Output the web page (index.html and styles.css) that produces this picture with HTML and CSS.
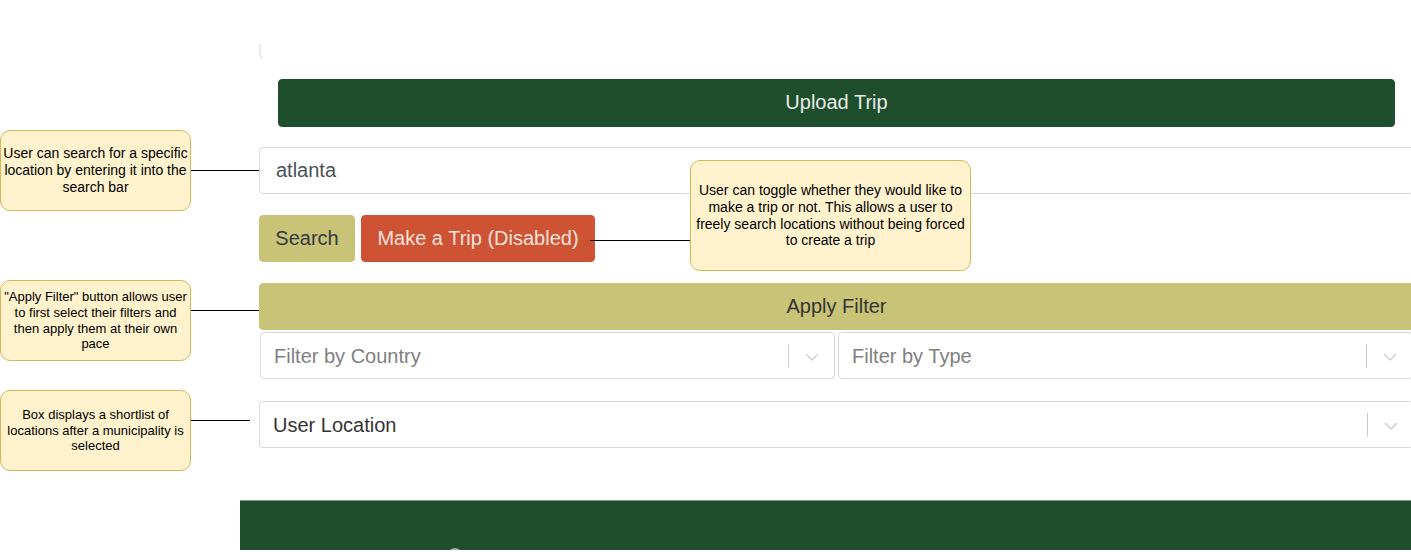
FILE: index.html
```html
<!DOCTYPE html>
<html lang="en">
<head>
<meta charset="utf-8">
<title>Trip Planner</title>
<link rel="stylesheet" href="styles.css">
</head>
<body>
<div class="canvas">
  <div class="app">
    <div class="container">
      <div class="brand"><svg class="brand-img" width="6" height="16" viewBox="0 0 6 16"><path d="M1 1 V13 L4 15" fill="none" stroke="#d9d9d9" stroke-width="1"/></svg></div>
      <button class="btn-upload">Upload Trip</button>
      <div class="search-input">atlanta</div>
      <div class="btn-row">
        <button class="btn btn-search">Search</button>
        <button class="btn btn-trip">Make a Trip (Disabled)</button>
      </div>
      <button class="btn-apply">Apply Filter</button>
      <div class="filters">
        <div class="select">
          <span class="select-value placeholder">Filter by Country</span>
          <span class="select-sep"></span>
          <span class="select-ind"><svg width="14" height="8" viewBox="0 0 14 8"><polyline points="1,1 7,7 13,1" fill="none" stroke="#cccccc" stroke-width="1.3"/></svg></span>
        </div>
        <div class="select">
          <span class="select-value placeholder">Filter by Type</span>
          <span class="select-sep"></span>
          <span class="select-ind"><svg width="14" height="8" viewBox="0 0 14 8"><polyline points="1,1 7,7 13,1" fill="none" stroke="#cccccc" stroke-width="1.3"/></svg></span>
        </div>
      </div>
      <div class="select select-location">
        <span class="select-value">User Location</span>
        <span class="select-sep"></span>
        <span class="select-ind"><svg width="14" height="8" viewBox="0 0 14 8"><polyline points="1,1 7,7 13,1" fill="none" stroke="#cccccc" stroke-width="1.3"/></svg></span>
      </div>
    </div>
    <footer class="footer"><span class="footer-icon"></span></footer>
  </div>

  <div class="link link-1"></div>
  <div class="link link-2"></div>
  <div class="link link-3"></div>
  <div class="link link-4"></div>

  <div class="note note-1">User can search for a specific location by entering it into the search bar</div>
  <div class="note note-2">User can toggle whether they would like to make a trip or not. This allows a user to freely search locations without being forced to create a trip</div>
  <div class="note note-3">"Apply Filter" button allows user to first select their filters and then apply them at their own pace</div>
  <div class="note note-4">Box displays a shortlist of locations after a municipality is selected</div>
</div>
</body>
</html>
```

FILE: styles.css
```css
* { box-sizing: border-box; }

html, body {
  margin: 0;
  padding: 0;
  background: #ffffff;
  overflow: hidden;
}

body {
  font-family: "Liberation Sans", Arial, Helvetica, sans-serif;
  width: 1411px;
  height: 552px;
}

.canvas {
  position: relative;
  width: 1411px;
  height: 552px;
  overflow: hidden;
}

.app {
  margin-left: 240px;
  padding-top: 40px;
  width: 1200px;
}

.container {
  margin-left: 19px;
  width: 1155px;
  display: flex;
  flex-direction: column;
}

.brand {
  height: 39px;
  display: flex;
  align-items: flex-start;
}

.brand-img { display: block; margin-top: 3px; }

button {
  font-family: inherit;
  cursor: pointer;
}

.btn-upload {
  margin: 0 19px;
  height: 48px;
  background: #1f4e2c;
  color: #e9ece9;
  border: 1px solid #1f4e2c;
  border-radius: 4px;
  font-size: 20px;
  display: flex;
  align-items: center;
  justify-content: center;
  padding: 0 0 2px;
}

.search-input {
  margin-top: 20px;
  height: 47px;
  border: 1px solid #d6dbe0;
  border-radius: 4px;
  padding: 0 16px;
  font-size: 20px;
  color: #495057;
  display: flex;
  align-items: center;
}

.btn-row {
  margin-top: 21px;
  display: flex;
  gap: 6px;
}

.btn {
  height: 47px;
  padding: 0;
  border-radius: 4px;
  font-size: 20px;
  border: 1px solid transparent;
  white-space: nowrap;
}

.btn-search {
  width: 96px;
  background: #c8c377;
  border-color: #c8c377;
  color: #343a40;
}

.btn-trip {
  width: 234px;
  background: #cd5334;
  border-color: #cd5334;
  color: #f6e1db;
}

.btn-apply {
  margin-top: 21px;
  height: 47px;
  background: #c8c377;
  border: 1px solid #c8c377;
  border-radius: 4px 0 0 4px;
  color: #333333;
  font-size: 20px;
}

.filters {
  margin-top: 2px;
  padding: 0 1px;
  display: grid;
  grid-template-columns: 1fr 1fr;
  gap: 3px;
}

.select {
  height: 47px;
  border: 1px solid #d9d9d9;
  border-radius: 4px;
  display: flex;
  align-items: center;
  background: #ffffff;
}

.select-value {
  flex: 1;
  padding: 2px 0 0 13px;
  font-size: 20px;
  color: #333333;
  white-space: nowrap;
  overflow: hidden;
}

.select-value.placeholder { color: #808080; }

.select-sep {
  width: 1px;
  height: 24px;
  background: #cccccc;
}

.select-ind {
  width: 45px;
  display: flex;
  align-items: center;
  justify-content: center;
  padding-top: 2px;
}

.select-ind svg { display: block; }

.select-location {
  margin-top: 22px;
}

.footer {
  margin-top: 52px;
  height: 50px;
  background: #1f4e2c;
  border-top: 1px solid #7f9a86;
  overflow: hidden;
  padding: 47px 0 0 208px;
}

.footer-icon {
  display: block;
  width: 14px;
  height: 14px;
  border-radius: 50%;
  background: #9fb0a3;
}

/* diagram annotations */
.note {
  position: absolute;
  background: #fff2cc;
  border: 1px solid #d6b656;
  border-radius: 10px;
  font-size: 13px;
  line-height: 1.2;
  color: #000000;
  text-align: center;
  display: flex;
  align-items: center;
  justify-content: center;
  padding: 0;
}

.note-1 { left: 0; top: 130px; width: 191px; height: 81px; font-size: 14px; }
.note-2 { left: 690px; top: 160px; width: 281px; height: 111px; padding: 0 3px; font-size: 14px; }
.note-3 { left: 0; top: 280px; width: 191px; height: 81px; }
.note-4 { left: 0; top: 390px; width: 191px; height: 81px; padding: 0 4px; }

.link {
  position: absolute;
  height: 1px;
  background: #000000;
}

.link-1 { left: 190px; top: 170px; width: 69px; }
.link-2 { left: 590px; top: 240px; width: 100px; }
.link-3 { left: 190px; top: 310px; width: 69px; }
.link-4 { left: 190px; top: 420px; width: 60px; }
```
